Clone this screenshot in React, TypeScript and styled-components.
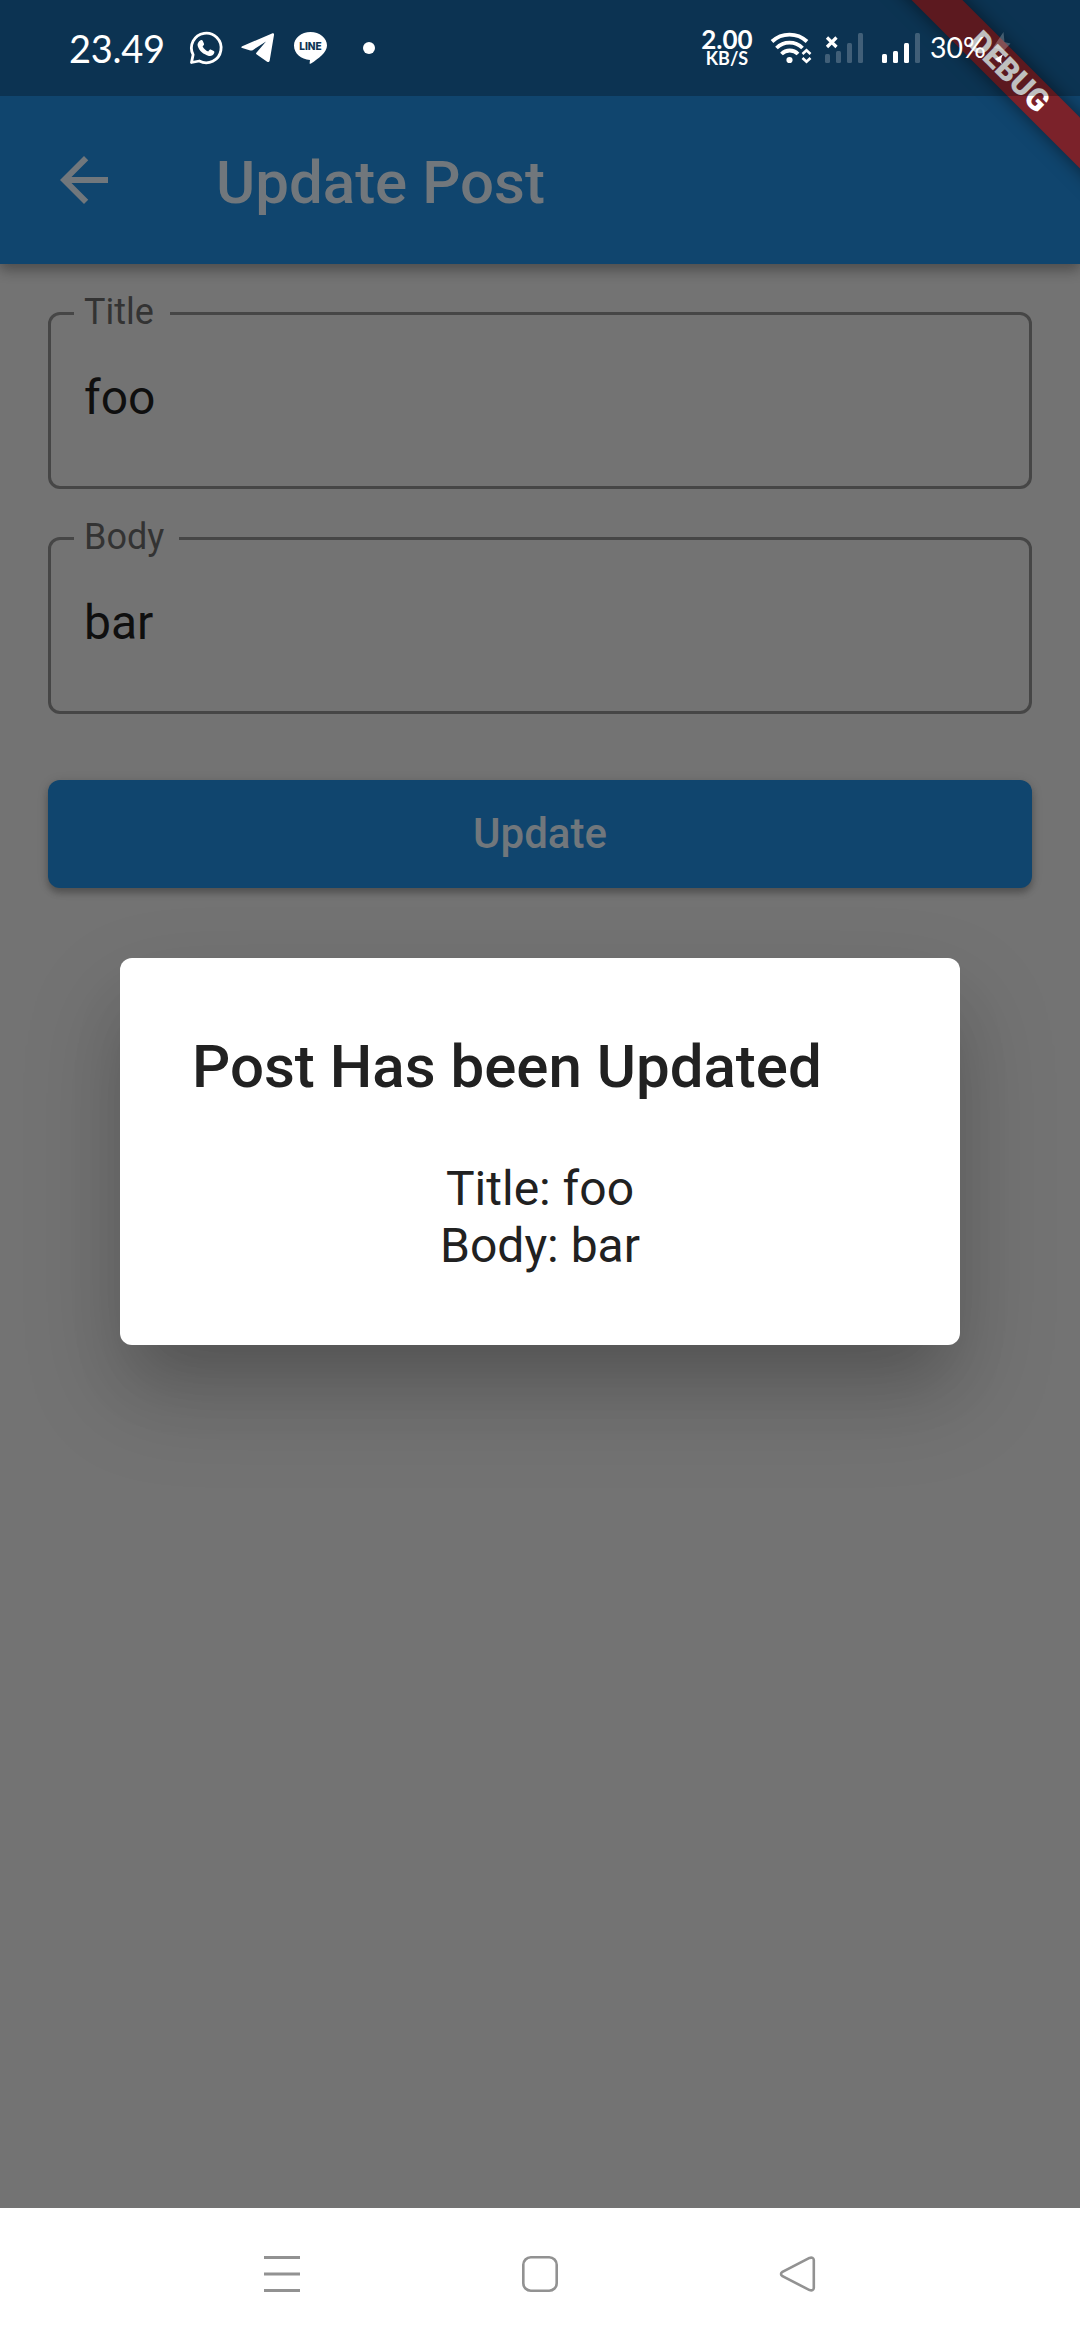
import React from "react";
import styled, { createGlobalStyle } from "styled-components";

const Global = createGlobalStyle`
  *, *::before, *::after { box-sizing: border-box; }
  html, body { margin: 0; padding: 0; background: #737373; }
  body { font-family: Roboto, "Noto Sans", sans-serif; overflow: hidden; }
`;

const Screen = styled.div`
  position: relative;
  display: flex;
  flex-direction: column;
  width: 1080px;
  height: 2340px;
  overflow: hidden;
  background: #737373;
`;

const StatusBar = styled.header`
  flex: none;
  display: flex;
  align-items: center;
  height: 96px;
  padding: 0 70px 0 69px;
  background: rgba(0, 0, 0, 0.25);
  color: #fff;
  z-index: 4;
`;

const Clock = styled.time`
  width: 94px;
  margin-right: 26px;
  font: 400 38px/44px Lato, sans-serif;
  letter-spacing: -0.3px;
  white-space: nowrap;
`;

const Spacer = styled.div`
  flex: 1;
`;

const Glyph = styled.svg<{ $gap?: number }>`
  flex: none;
  display: block;
  margin-right: ${(p) => p.$gap ?? 0}px;
  overflow: visible;
`;

const NetSpeed = styled.div`
  display: flex;
  flex-direction: column;
  align-items: center;
  width: 54px;
  margin-right: 17px;
  font-family: Lato, sans-serif;
  font-weight: 700;
`;

const SpeedValue = styled.span`
  font-size: 26px;
  line-height: 20px;
`;

const SpeedUnit = styled.span`
  font-size: 18px;
  line-height: 18px;
`;

const Battery = styled.span`
  width: 63px;
  margin-bottom: 2px;
  font: 400 28.5px/36px Lato, sans-serif;
  white-space: nowrap;
`;

const AppBar = styled.nav`
  flex: none;
  display: flex;
  align-items: center;
  height: 264px;
  margin-top: -96px;
  padding: 96px 0 0 48px;
  background: #10456e;
  box-shadow: 0 6px 12px rgba(0, 0, 0, 0.26), 0 3px 16px rgba(0, 0, 0, 0.12);
  z-index: 1;
`;

const AppTitle = styled.h1`
  margin: 5px 0 0 96px;
  font-size: 60px;
  line-height: 70px;
  font-weight: 500;
  color: #71777c;
`;

const Form = styled.form`
  flex: 1;
  display: flex;
  flex-direction: column;
  padding: 48px 48px 0;
`;

const Field = styled.fieldset`
  height: 198px;
  margin: -21px 0 48px;
  padding: 0 0 0 33px;
  min-width: 0;
  border: 3px solid #464646;
  border-radius: 12px;
`;

const Legend = styled.legend<{ $width: number }>`
  width: ${(p) => p.$width}px;
  height: 45px;
  margin-left: -10px;
  padding: 0 0 0 10px;
  font-size: 36px;
  line-height: 43px;
  color: #333;
`;

const Value = styled.div`
  margin-top: 34px;
  font-size: 48px;
  line-height: 56px;
  color: #0f0f0f;
`;

const Submit = styled.button`
  height: 108px;
  margin: 18px 0 0;
  border: 0;
  border-radius: 12px;
  background: #10456e;
  color: #71777c;
  font: 500 42px/50px Roboto, sans-serif;
  box-shadow: 0 5px 6px rgba(0, 0, 0, 0.22), 0 2px 12px rgba(0, 0, 0, 0.14);
`;

const Dialog = styled.section`
  position: absolute;
  left: 120px;
  top: 958px;
  width: 840px;
  height: 387px;
  padding: 73px 72px 0;
  border-radius: 12px;
  background: #fff;
  color: #212121;
  box-shadow: 0 44px 60px -16px rgba(0, 0, 0, 0.16),
    0 46px 100px 6px rgba(0, 0, 0, 0.14);
`;

const DialogTitle = styled.h2`
  margin: 0 0 57px;
  font-size: 60px;
  line-height: 72px;
  font-weight: 500;
  white-space: nowrap;
`;

const DialogLine = styled.p`
  margin: 0;
  font-size: 48px;
  line-height: 57px;
  text-align: center;
`;

const NavBar = styled.footer`
  flex: none;
  display: flex;
  align-items: center;
  justify-content: center;
  gap: 222px;
  height: 132px;
  background: #fff;
`;

const BannerCorner = styled.div`
  position: absolute;
  top: 0;
  right: 0;
  width: 260px;
  height: 260px;
  overflow: hidden;
  z-index: 3;
`;

const Banner = styled.div`
  position: absolute;
  left: 8.5px;
  top: 53.5px;
  width: 360px;
  height: 36px;
  transform: rotate(45deg);
  background: #7b222a;
  box-shadow: 0 0 18px rgba(0, 0, 0, 0.5);
  color: #fff;
  font: 900 31px/36px Roboto, sans-serif;
  text-align: center;
`;

const Signal = ({ levels, cross, gap }: { levels: number; cross?: boolean; gap: number }) => (
  <Glyph width="38" height="30" viewBox="0 0 38 30" $gap={gap}>
    {[9, 12, 20, 30].map((h, i) => (
      <rect key={h} x={i * 11} y={30 - h} width="5" height={h} rx="1.5" fill="#fff" opacity={i < levels ? 1 : 0.22} />
    ))}
    {cross && <path d="M2 4.500l9.500 9.500M11.500 4.500l-9.500 9.500" stroke="#fff" strokeWidth="3.200" />}
  </Glyph>
);

export default function App() {
  return (
    <>
      <Global />
      <Screen>
        <StatusBar>
          <Clock>23.49</Clock>
          <Glyph width="34" height="34" viewBox="0 0 34 34" $gap={18}>
            <path d="M2.500 31.500l1.600-7.800A14.800 14.800 0 1 1 10.300 30z" fill="none" stroke="#fff" strokeWidth="2.800" strokeLinejoin="round" />
            <path d="M11.600 9.200c.8-.5 1.700-.3 2.100.6l1.300 3c.3.700-.2 1.400-1.400 2.700 1.500 2.600 3.200 4 5.600 5 1.300-1.600 1.800-2.200 2.500-1.900l3 1.500c.9.500.8 1 .5 2-.7 2.400-3.400 3.300-5.300 2.800-5.600-1.400-9.600-4.900-11.200-9.800-.7-2.400.8-5 2.900-5.900z" fill="#fff" />
          </Glyph>
          <Glyph width="34" height="30" viewBox="0 0 34 30" $gap={19}>
            <path d="M1.200 13.300L31 .4c1.300-.5 2.200.2 2 1.600l-4.300 25.600c-.3 1.500-1.300 1.900-2.600 1.100L15.800 21.600c-1-.7-1-1.400-.2-2.200L25 8.500 11.700 17.200c-.8.500-1.500.5-2.400.3L1.200 15c-1.200-.4-1.200-1.200 0-1.700z" fill="#fff" />
          </Glyph>
          <Glyph width="33" height="32" viewBox="0 0 33 32" $gap={36}>
            <path d="M16.500 0C25.600 0 33 6 33 13.500c0 6.800-8.500 13.200-16 18-1.300.8-1.500.2-1.300-1l.3-2.600C7 27.200 0 21.500 0 13.500 0 6 7.400 0 16.500 0z" fill="#fff" />
            <text x="16.500" y="18" textAnchor="middle" fontFamily="Inter, sans-serif" fontWeight="800" fontSize="11" textLength="22.500" lengthAdjust="spacingAndGlyphs" fill="#0c3453">LINE</text>
          </Glyph>
          <Glyph width="12" height="12" viewBox="0 0 12 12">
            <circle cx="6" cy="6" r="6" fill="#fff" />
          </Glyph>
          <Spacer />
          <NetSpeed>
            <SpeedValue>2.00</SpeedValue>
            <SpeedUnit>KB/S</SpeedUnit>
          </NetSpeed>
          <Glyph width="40" height="30" viewBox="0 0 40 30" $gap={14}>
            <g fill="none" stroke="#fff" strokeWidth="3.800">
              <path d="M1 8.500a25.500 25.500 0 0 1 35 0M5.500 15a18.500 18.500 0 0 1 26 0M10.500 21a11.500 11.500 0 0 1 16.500 0" />
              <path d="M31.500 21l4-3.800 4 3.800M31.500 25l4 3.800 4-3.800" strokeWidth="2.600" />
            </g>
            <circle cx="18.500" cy="27" r="3.100" fill="#fff" />
          </Glyph>
          <Signal levels={0} cross gap={19} />
          <Signal levels={3} gap={10} />
          <Battery>30%</Battery>
          <Glyph width="17" height="32" viewBox="0 0 17 32">
            <path d="M10.500 0l1 10 6 1.500-6.500 7L0 15.500z" fill="#fff" opacity="0.24" />
            <path d="M10.500 22L2 27l7 5c-1.500-3.500-.8-7 1.500-10z" fill="#fff" />
          </Glyph>
        </StatusBar>
        <AppBar>
          <Glyph width="72" height="72" viewBox="0 0 24 24">
            <path d="M20 11H7.830l5.590-5.590L12 4l-8 8 8 8 1.410-1.410L7.830 13H20v-2z" fill="#71777c" />
          </Glyph>
          <AppTitle>Update Post</AppTitle>
        </AppBar>
        <Form>
          <Field>
            <Legend $width={96}>Title</Legend>
            <Value>foo</Value>
          </Field>
          <Field>
            <Legend $width={105}>Body</Legend>
            <Value>bar</Value>
          </Field>
          <Submit type="button">Update</Submit>
        </Form>
        <NavBar>
          <Glyph width="36" height="36" viewBox="0 0 36 36">
            <path d="M0 1.500h36M0 18h36M0 34.500h36" stroke="#929292" strokeWidth="3" />
          </Glyph>
          <Glyph width="36" height="36" viewBox="0 0 36 36">
            <rect x="1.300" y="1.300" width="33.400" height="33.400" rx="7.500" fill="none" stroke="#929292" strokeWidth="2.600" />
          </Glyph>
          <Glyph width="36" height="36" viewBox="0 0 36 36">
            <path d="M29.500 1.900L2.500 15.800q-3 2.200 0 4.400l27 13.900q3.900 1 4.300-2V3.900q-.4-3-4.300-2z" fill="none" stroke="#929292" strokeWidth="2.600" />
          </Glyph>
        </NavBar>
        <Dialog role="dialog">
          <DialogTitle>Post Has been Updated</DialogTitle>
          <DialogLine>Title: foo</DialogLine>
          <DialogLine>Body: bar</DialogLine>
        </Dialog>
        <BannerCorner>
          <Banner>DEBUG</Banner>
        </BannerCorner>
      </Screen>
    </>
  );
}
